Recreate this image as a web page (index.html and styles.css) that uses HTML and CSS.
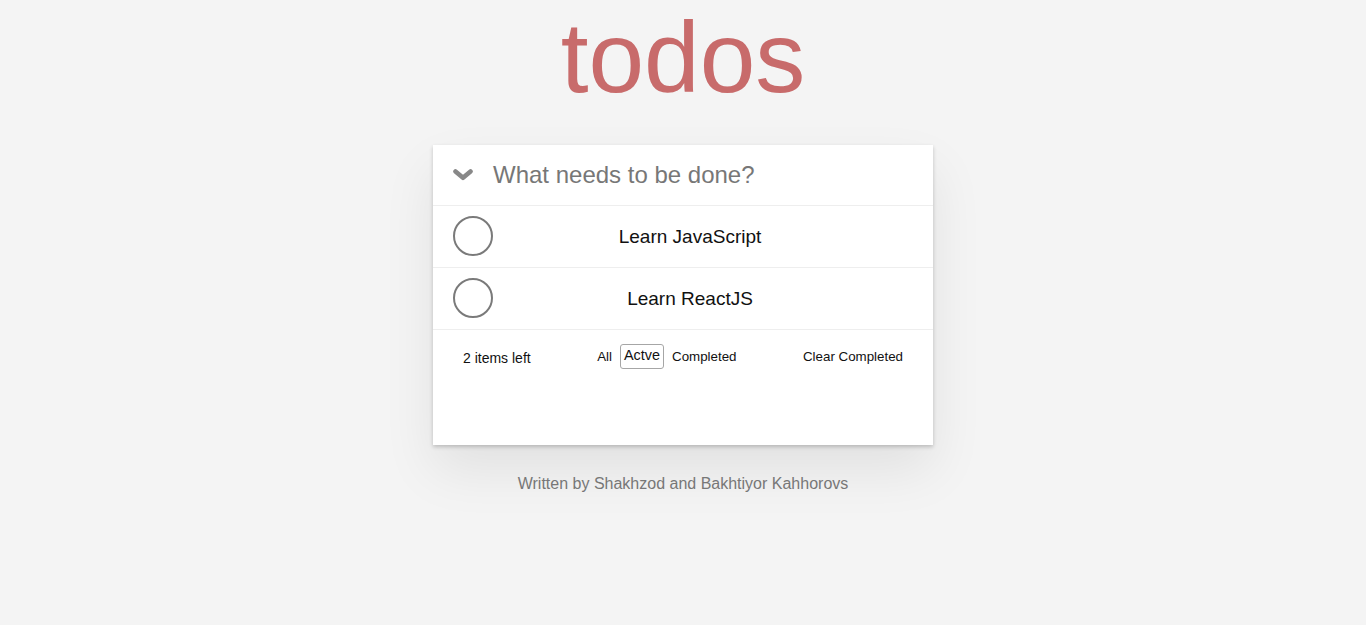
FILE: index.html
```html
<!DOCTYPE html>
<html lang="en">
<head>
<meta charset="utf-8">
<title>todos</title>
<link rel="stylesheet" href="styles.css">
</head>
<body>
<main class="app">
  <h1 class="title">todos</h1>
  <section class="card">
    <header class="new-row">
      <svg class="chevron" width="20" height="12" viewBox="0 0 20 12" aria-hidden="true">
        <polyline points="2.5,2.5 10,8.8 17.5,2.5" fill="none" stroke="#888" stroke-width="4.6" stroke-linecap="round" stroke-linejoin="round"/>
      </svg>
      <span class="placeholder">What needs to be done?</span>
    </header>
    <ul class="list">
      <li class="item"><span class="check"></span><span class="label">Learn JavaScript</span></li>
      <li class="item"><span class="check"></span><span class="label">Learn ReactJS</span></li>
    </ul>
    <footer class="card-footer">
      <span class="count">2 items left</span>
      <div class="filters">
        <span class="filter">All</span>
        <span class="filter selected">Actve</span>
        <span class="filter">Completed</span>
      </div>
      <span class="clear">Clear Completed</span>
    </footer>
  </section>
  <p class="credit">Written by Shakhzod and Bakhtiyor Kahhorovs</p>
</main>
</body>
</html>
```
FILE: styles.css
```css
html, body {
  margin: 0;
  padding: 0;
  background: #f4f4f4;
  font-family: "Liberation Sans", Arial, sans-serif;
  color: #111;
}
body {
  min-height: 100vh;
}
.app {
  display: flex;
  flex-direction: column;
  align-items: center;
}
.title {
  margin: 7px 0 38px;
  font-size: 100px;
  line-height: 100px;
  font-weight: 400;
  color: #c86b6b;
}
.card {
  width: 500px;
  height: 300px;
  background: #fff;
  display: flex;
  flex-direction: column;
  box-shadow: 0 2px 4px rgba(0, 0, 0, 0.2), 0 25px 50px rgba(0, 0, 0, 0.08);
}
.new-row {
  height: 61px;
  box-sizing: border-box;
  border-bottom: 1px solid #eeeeee;
  display: flex;
  align-items: center;
  padding: 0 20px;
}
.chevron {
  display: block;
  margin-top: -1px;
}
.placeholder {
  margin-left: 20px;
  font-size: 24px;
  color: #777;
}
.list {
  list-style: none;
  margin: 0;
  padding: 0;
}
.item {
  display: flex;
  align-items: center;
  height: 62px;
  box-sizing: border-box;
  padding: 0 20px 1px;
  border-bottom: 1px solid #eeeeee;
}
.check {
  width: 36px;
  height: 36px;
  border: 2px solid #7a7a7a;
  border-radius: 50%;
  flex: none;
}
.label {
  flex: 1;
  text-align: center;
  font-size: 19px;
  padding: 2px 26px 0 0;
  color: #111;
}
.card-footer {
  display: flex;
  justify-content: space-between;
  align-items: center;
  padding: 14px 30px 0;
  font-size: 13.33px;
  color: #111;
}
.count {
  font-size: 14px;
  margin-top: 2px;
}
.filters {
  display: flex;
  align-items: center;
  gap: 8px;
}
.filter {
  padding: 3px 0;
}
.selected {
  font-size: 14.4px;
  border: 1px solid #a6a6a6;
  border-radius: 3px;
  padding: 2px 3px 5px;
}
.credit {
  margin: 30px 0 0;
  font-size: 16px;
  color: #777;
}
```
